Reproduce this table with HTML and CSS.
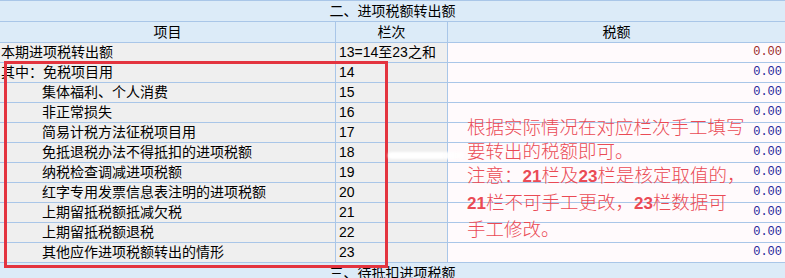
FILE: index.html
```html
<!DOCTYPE html>
<html lang="zh-CN">
<head>
<meta charset="utf-8">
<title>进项税额转出额</title>
<link rel="stylesheet" href="styles.css">
</head>
<body>
<div class="sheet">
  <div class="row title">二、进项税额转出额</div>
  <div class="row head">
    <div class="c1">项目</div>
    <div class="c2">栏次</div>
    <div class="c3">税额</div>
  </div>
  <div class="row data">
    <div class="c1">本期进项税转出额</div>
    <div class="c2">13=14至23之和</div>
    <div class="c3 val sum">0.00</div>
  </div>
  <div class="row data">
    <div class="c1">其中：免税项目用</div>
    <div class="c2">14</div>
    <div class="c3 val">0.00</div>
  </div>
  <div class="row data">
    <div class="c1 ind">集体福利、个人消费</div>
    <div class="c2">15</div>
    <div class="c3 val">0.00</div>
  </div>
  <div class="row data">
    <div class="c1 ind">非正常损失</div>
    <div class="c2">16</div>
    <div class="c3 val">0.00</div>
  </div>
  <div class="row data">
    <div class="c1 ind">简易计税方法征税项目用</div>
    <div class="c2">17</div>
    <div class="c3 val">0.00</div>
  </div>
  <div class="row data">
    <div class="c1 ind">免抵退税办法不得抵扣的进项税额</div>
    <div class="c2">18</div>
    <div class="c3 val">0.00</div>
  </div>
  <div class="row data">
    <div class="c1 ind">纳税检查调减进项税额</div>
    <div class="c2">19</div>
    <div class="c3 val">0.00</div>
  </div>
  <div class="row data">
    <div class="c1 ind">红字专用发票信息表注明的进项税额</div>
    <div class="c2">20</div>
    <div class="c3 val">0.00</div>
  </div>
  <div class="row data">
    <div class="c1 ind">上期留抵税额抵减欠税</div>
    <div class="c2">21</div>
    <div class="c3 val">0.00</div>
  </div>
  <div class="row data">
    <div class="c1 ind">上期留抵税额退税</div>
    <div class="c2">22</div>
    <div class="c3 val">0.00</div>
  </div>
  <div class="row data">
    <div class="c1 ind">其他应作进项税额转出的情形</div>
    <div class="c2">23</div>
    <div class="c3 val">0.00</div>
  </div>
  <div class="row title">三、待抵扣进项税额</div>

  <div class="redbox"></div>
  <div class="smudge"></div>
  <div class="note">根据实际情况在对应栏次手工填写<br>要转出的税额即可。<br>注意：<b>21</b>栏及<b>23</b>栏是核定取值的，<br><b>21</b>栏不可手工更改，<b>23</b>栏数据可<br>手工修改。</div>
</div>
</body>
</html>
```

FILE: styles.css
```css
html, body {
  margin: 0;
  padding: 0;
  background: #ffffff;
}
body {
  font-family: "Liberation Sans", "Noto Sans CJK SC", sans-serif;
  font-size: 14px;
  color: #000000;
  overflow: hidden;
}
.sheet {
  position: relative;
  width: 785px;
  border-top: 1px solid #a9c6e8;
}
.row {
  box-sizing: border-box;
  border-bottom: 1px solid #a9c6e8;
}
.title {
  height: 21px;
  line-height: 20px;
  text-align: center;
  background: #dcebf8;
}
.head, .data {
  display: grid;
  grid-template-columns: 336px 112px 1fr;
}
.head {
  height: 21px;
  line-height: 20px;
  background: #dcebf8;
  text-align: center;
}
.data {
  height: 20px;
  line-height: 19px;
}
.c1, .c2 {
  box-sizing: border-box;
  border-right: 1px solid #a9c6e8;
  white-space: nowrap;
  overflow: hidden;
}
.data .c1 {
  background: #efefef;
  padding-left: 1px;
}
.data .c1.ind {
  padding-left: 42px;
}
.data .c2 {
  background: #efefef;
  padding-left: 3px;
}
.data .c3 {
  background: #fffafc;
}
.val {
  text-align: right;
  padding-right: 3px;
  font-family: "Liberation Mono", monospace;
  font-size: 12px;
  color: #27279a;
}
.val.sum {
  color: #9a2a2a;
}
.redbox {
  position: absolute;
  left: 4px;
  top: 60px;
  width: 384px;
  height: 207px;
  box-sizing: border-box;
  border: 3px solid #e3343f;
}
.smudge {
  position: absolute;
  left: 388px;
  top: 151px;
  width: 76px;
  height: 7px;
  border-radius: 4px;
  background: linear-gradient(to right, #ffffff 0%, #ffffff 70%, rgba(255,255,255,0.6) 100%);
  filter: blur(1px);
}
.note {
  position: absolute;
  left: 467px;
  top: 113px;
  font-family: "Noto Sans CJK SC", sans-serif;
  font-weight: 300;
  font-size: 18.5px;
  line-height: 24px;
  color: #ea4a55;
  white-space: nowrap;
}
.note b {
  font-family: "Liberation Sans", sans-serif;
  font-weight: bold;
  font-size: 17px;
}
```
